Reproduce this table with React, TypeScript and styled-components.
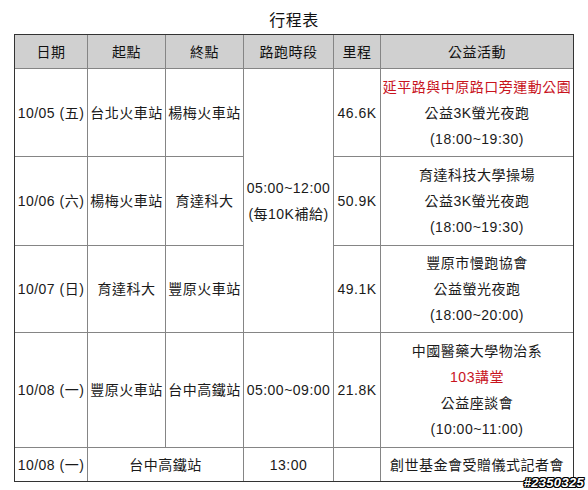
import React from "react"
import styled, { createGlobalStyle } from "styled-components"

const GlobalStyle = createGlobalStyle`
  body {
    margin: 0;
    background: #fff;
    font-family: "Liberation Sans", "Noto Sans CJK TC", sans-serif;
  }
`

const Page = styled.div`
  position: relative;
  width: 588px;
  height: 490px;
  overflow: hidden;
`

const Title = styled.div`
  padding-top: 8px;
  height: 26px;
  line-height: 26px;
  text-align: center;
  font-size: 16px;
  letter-spacing: 0.5px;
  color: #111;
`

const Table = styled.table`
  width: 560px;
  margin: 0 auto;
  table-layout: fixed;
  border-collapse: separate;
  border-spacing: 0;
  border: 1px solid #333;
  font-size: 14px;
  color: #1a1a1a;

  tr:last-child td {
    border-bottom: none;
  }
`

const Row = styled.tr<{ $h: number }>`
  height: ${({ $h }) => $h}px;
`

const Cell = styled.td`
  box-sizing: border-box;
  padding: 0;
  text-align: center;
  vertical-align: middle;
  white-space: nowrap;
  line-height: 26px;
  letter-spacing: 0.5px;
  border-right: 1px solid #858585;
  border-bottom: 1px solid #858585;

  &:last-child {
    border-right: none;
  }
`

const HeadCell = styled(Cell).attrs({ as: "th" })`
  background: #d0d0d0;
  font-weight: normal;
  color: #111;
`

const Line = styled.div<{ $red?: boolean }>`
  line-height: 26px;
  color: ${({ $red }) => ($red ? "#c8141e" : "#1a1a1a")};
`

const Watermark = styled.div`
  position: absolute;
  right: 4px;
  top: 475px;
  font-size: 13px;
  font-weight: bold;
  font-style: italic;
  color: #fff;
  letter-spacing: 0.3px;
  text-shadow: -1px -1px 0 #000, 1px -1px 0 #000, -1px 1px 0 #000,
    1px 1px 0 #000, 0 1px 0 #000, 0 -1px 0 #000, 1px 0 0 #000, -1px 0 0 #000;
`

const widths = [73, 78, 78, 90, 47, 192]

type Activity = { text: string; red?: boolean }[]

const Activities = ({ lines }: { lines: Activity }) => (
  <>
    {lines.map((l, i) => (
      <Line key={i} $red={l.red}>
        {l.text}
      </Line>
    ))}
  </>
)

export default function App() {
  return (
    <Page>
      <GlobalStyle />
      <Title>行程表</Title>
      <Table>
        <colgroup>
          {widths.map((w, i) => (
            <col key={i} style={{ width: w }} />
          ))}
        </colgroup>
        <tbody>
          <Row $h={34}>
            <HeadCell>日期</HeadCell>
            <HeadCell>起點</HeadCell>
            <HeadCell>終點</HeadCell>
            <HeadCell>路跑時段</HeadCell>
            <HeadCell>里程</HeadCell>
            <HeadCell>公益活動</HeadCell>
          </Row>
          <Row $h={88}>
            <Cell>10/05 (五)</Cell>
            <Cell>台北火車站</Cell>
            <Cell>楊梅火車站</Cell>
            <Cell rowSpan={3}>
              <Line>05:00~12:00</Line>
              <Line>(每10K補給)</Line>
            </Cell>
            <Cell>46.6K</Cell>
            <Cell>
              <Activities
                lines={[
                  { text: "延平路與中原路口旁運動公園", red: true },
                  { text: "公益3K螢光夜跑" },
                  { text: "(18:00~19:30)" },
                ]}
              />
            </Cell>
          </Row>
          <Row $h={89}>
            <Cell>10/06 (六)</Cell>
            <Cell>楊梅火車站</Cell>
            <Cell>育達科大</Cell>
            <Cell>50.9K</Cell>
            <Cell>
              <Activities
                lines={[
                  { text: "育達科技大學操場" },
                  { text: "公益3K螢光夜跑" },
                  { text: "(18:00~19:30)" },
                ]}
              />
            </Cell>
          </Row>
          <Row $h={87}>
            <Cell>10/07 (日)</Cell>
            <Cell>育達科大</Cell>
            <Cell>豐原火車站</Cell>
            <Cell>49.1K</Cell>
            <Cell>
              <Activities
                lines={[
                  { text: "豐原市慢跑協會" },
                  { text: "公益螢光夜跑" },
                  { text: "(18:00~20:00)" },
                ]}
              />
            </Cell>
          </Row>
          <Row $h={115}>
            <Cell>10/08 (一)</Cell>
            <Cell>豐原火車站</Cell>
            <Cell>台中高鐵站</Cell>
            <Cell>05:00~09:00</Cell>
            <Cell>21.8K</Cell>
            <Cell>
              <Activities
                lines={[
                  { text: "中國醫藥大學物治系" },
                  { text: "103講堂", red: true },
                  { text: "公益座談會" },
                  { text: "(10:00~11:00)" },
                ]}
              />
            </Cell>
          </Row>
          <Row $h={33}>
            <Cell>10/08 (一)</Cell>
            <Cell colSpan={2}>台中高鐵站</Cell>
            <Cell>13:00</Cell>
            <Cell></Cell>
            <Cell>創世基金會受贈儀式記者會</Cell>
          </Row>
        </tbody>
      </Table>
      <Watermark>#2350325</Watermark>
    </Page>
  )
}
